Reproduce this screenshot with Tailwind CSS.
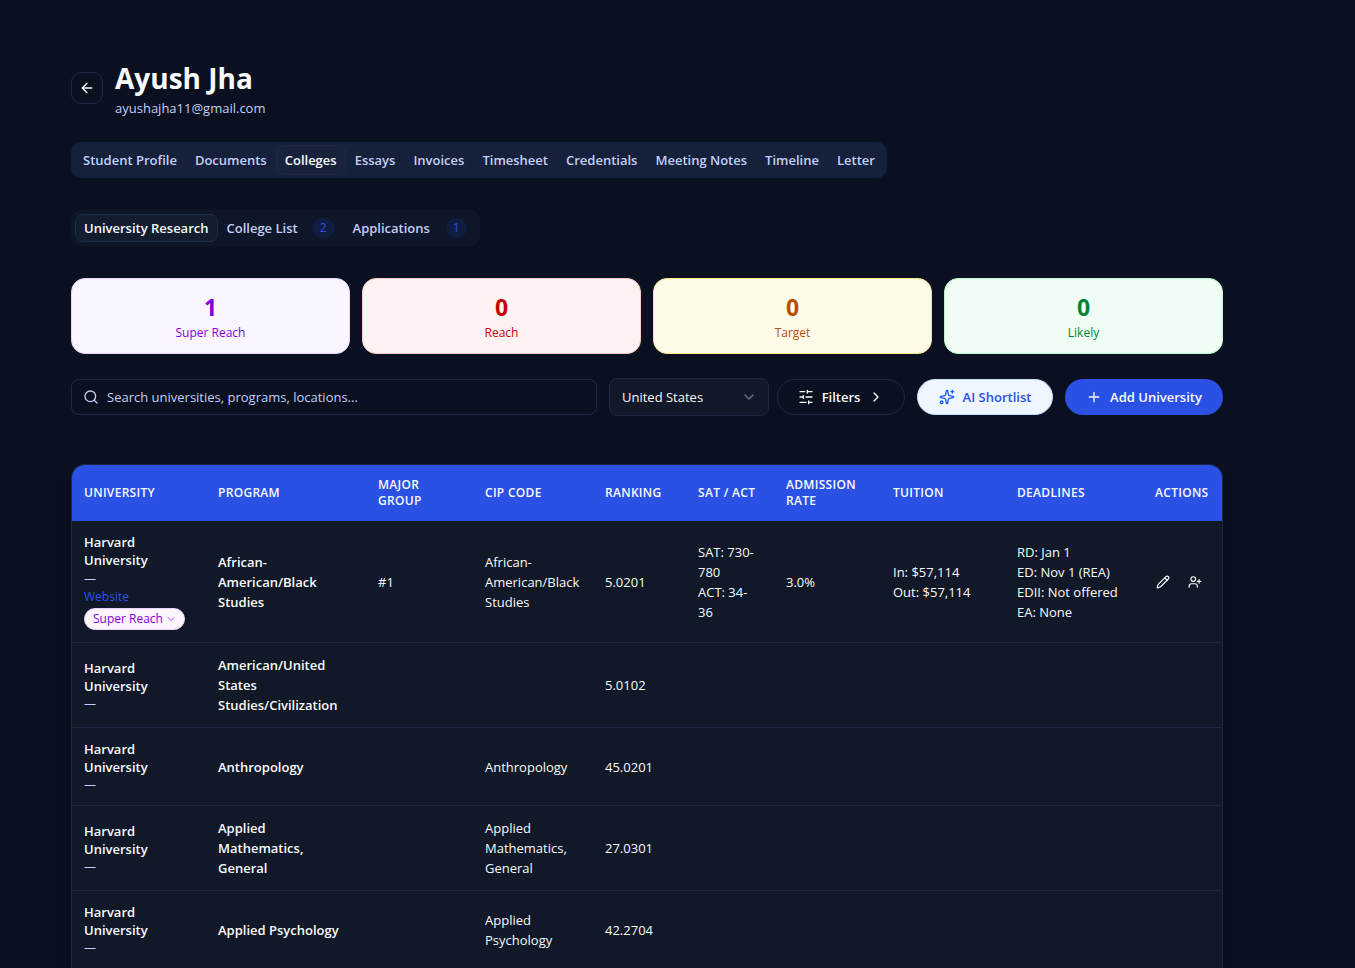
<!DOCTYPE html>
<html lang="en">
<head>
    <meta charset="UTF-8">
    <meta name="viewport" content="width=device-width, initial-scale=1.0">
    <title>Ayush Jha - Colleges</title>
    <script src="https://cdn.jsdelivr.net/npm/@tailwindcss/browser@4"></script>
</head>
<body class="bg-[#0a101f] text-[#f8fafc] font-['Open_Sans','Noto_Sans',sans-serif] text-[13px] leading-5">

    <main class="pt-[58px] pl-[71px] pr-[132px]">

        <!-- Student header -->
        <header class="flex items-center gap-3">
            <button type="button" aria-label="Back" class="flex items-center justify-center size-8 rounded-[10px] border border-[#1e2842]">
                <svg class="size-4" viewBox="0 0 24 24" fill="none" stroke="currentColor" stroke-width="2" stroke-linecap="round" stroke-linejoin="round"><path d="m12 19-7-7 7-7"/><path d="M19 12H5"/></svg>
            </button>
            <div>
                <h1 class="text-[28px] leading-10 font-bold">Ayush Jha</h1>
                <p class="text-[#c3cff5]">ayushajha11@gmail.com</p>
            </div>
        </header>

        <!-- Main tabs -->
        <nav class="mt-6 flex w-fit h-9 items-center rounded-[10px] bg-[#15203a] p-[3px] font-semibold text-[#c3cff5] whitespace-nowrap">
            <a href="#profile" class="px-2 py-1 border border-transparent">Student Profile</a>
            <a href="#documents" class="px-2 py-1 border border-transparent">Documents</a>
            <a href="#colleges" class="px-2 py-1 border border-[#1e2842] rounded-lg bg-[#18223a] text-[#f8fafc]">Colleges</a>
            <a href="#essays" class="px-2 py-1 border border-transparent">Essays</a>
            <a href="#invoices" class="px-2 py-1 border border-transparent">Invoices</a>
            <a href="#timesheet" class="px-2 py-1 border border-transparent">Timesheet</a>
            <a href="#credentials" class="px-2 py-1 border border-transparent">Credentials</a>
            <a href="#notes" class="px-2 py-1 border border-transparent">Meeting Notes</a>
            <a href="#timeline" class="px-2 py-1 border border-transparent">Timeline</a>
            <a href="#letter" class="px-2 py-1 border border-transparent">Letter</a>
        </nav>

        <!-- College tabs -->
        <nav class="mt-8 flex w-fit h-9 items-center rounded-[10px] bg-[#0e1629] p-1 font-semibold text-[#c3cff5] whitespace-nowrap">
            <a href="#research" class="px-2 py-[3px] border border-[#1e2b45] rounded-lg bg-[#131d30] text-[#f8fafc]">University Research</a>
            <a href="#list" class="flex items-center px-2 py-[3px] border border-transparent">College List
                <span class="ml-3.5 rounded-full bg-[#101c40] px-2 text-xs leading-5 font-medium text-[#2b50e4]">2</span>
            </a>
            <a href="#applications" class="flex items-center px-2 py-[3px] border border-transparent">Applications
                <span class="ml-4 rounded-full bg-[#101c40] px-[7px] text-xs leading-5 font-medium text-[#2b50e4]">1</span>
            </a>
        </nav>

        <!-- Category counts -->
        <section class="mt-8 grid grid-cols-4 gap-3 text-center">
            <div class="rounded-[14px] border border-purple-200 bg-purple-50 text-purple-700 p-3">
                <p class="text-[23px] leading-8 font-bold">1</p>
                <p class="mt-0.5 text-xs leading-4 font-medium">Super Reach</p>
            </div>
            <div class="rounded-[14px] border border-red-200 bg-red-50 text-red-700 p-3">
                <p class="text-[23px] leading-8 font-bold">0</p>
                <p class="mt-0.5 text-xs leading-4 font-medium">Reach</p>
            </div>
            <div class="rounded-[14px] border border-amber-200 bg-amber-50 text-amber-700 p-3">
                <p class="text-[23px] leading-8 font-bold">0</p>
                <p class="mt-0.5 text-xs leading-4 font-medium">Target</p>
            </div>
            <div class="rounded-[14px] border border-green-200 bg-green-50 text-green-700 p-3">
                <p class="text-[23px] leading-8 font-bold">0</p>
                <p class="mt-0.5 text-xs leading-4 font-medium">Likely</p>
            </div>
        </section>

        <!-- Search and actions -->
        <section class="mt-6 flex items-center gap-3">
            <div class="relative flex-1">
                <svg class="absolute left-3 top-2.5 size-4 text-[#c3cff5]" viewBox="0 0 24 24" fill="none" stroke="currentColor" stroke-width="2" stroke-linecap="round" stroke-linejoin="round"><path d="m21 21-4.34-4.34"/><circle cx="11" cy="11" r="8"/></svg>
                <input type="text" aria-label="Search universities" placeholder="Search universities, programs, locations..." class="block w-full h-9 rounded-lg border border-[#1e2842] pl-[35px] pr-3 placeholder:text-[#c3cff5]">
            </div>
            <div class="flex items-center gap-2">
                <div class="relative">
                    <select aria-label="Country" class="block w-40 h-[38px] appearance-none rounded-lg border border-[#1e2842] bg-[#111827] px-3">
                        <option>United States</option>
                    </select>
                    <svg class="pointer-events-none absolute right-3 top-[11px] size-4 text-[#64718f]" viewBox="0 0 24 24" fill="none" stroke="currentColor" stroke-width="2" stroke-linecap="round" stroke-linejoin="round"><path d="m6 9 6 6 6-6"/></svg>
                </div>
                <button type="button" class="flex w-32 h-9 items-center justify-center gap-2 rounded-full border border-[#1e2842] font-semibold">
                    <svg class="size-4" viewBox="0 0 24 24" fill="none" stroke="currentColor" stroke-width="2" stroke-linecap="round" stroke-linejoin="round"><path d="M21 4h-7M10 4H3M21 12h-9M8 12H3M21 20h-5M12 20H3M14 2v4M8 10v4M16 18v4"/></svg>
                    Filters
                    <svg class="size-4" viewBox="0 0 24 24" fill="none" stroke="currentColor" stroke-width="2" stroke-linecap="round" stroke-linejoin="round"><path d="m9 18 6-6-6-6"/></svg>
                </button>
            </div>
            <button type="button" class="flex w-[136px] h-9 items-center justify-center gap-2 rounded-full border border-blue-200 bg-blue-50 font-semibold text-[#2b50e4]">
                <svg class="size-4 text-blue-600" viewBox="0 0 24 24" fill="none" stroke="currentColor" stroke-width="2" stroke-linecap="round" stroke-linejoin="round"><path d="M11.017 2.814a1 1 0 0 1 1.966 0l1.051 5.558a2 2 0 0 0 1.594 1.594l5.558 1.051a1 1 0 0 1 0 1.966l-5.558 1.051a2 2 0 0 0-1.594 1.594l-1.051 5.558a1 1 0 0 1-1.966 0l-1.051-5.558a2 2 0 0 0-1.594-1.594l-5.558-1.051a1 1 0 0 1 0-1.966l5.558-1.051a2 2 0 0 0 1.594-1.594z"/><path d="M20 2v4M22 4h-4"/><circle cx="4" cy="20" r="2"/></svg>
                AI Shortlist
            </button>
            <button type="button" class="flex w-[158px] h-9 items-center justify-center gap-2 rounded-full bg-[#2b50e4] font-semibold">
                <svg class="size-4" viewBox="0 0 24 24" fill="none" stroke="currentColor" stroke-width="2" stroke-linecap="round" stroke-linejoin="round"><path d="M5 12h14M12 5v14"/></svg>
                Add University
            </button>
        </section>

        <!-- University table -->
        <div class="mt-12 overflow-hidden rounded-t-[14px] border border-b-0 border-[#1e2842] bg-[#111827] shadow-lg">
            <table class="w-full table-fixed text-left">
                <colgroup>
                    <col class="w-[134px]">
                    <col class="w-[160px]">
                    <col class="w-[107px]">
                    <col class="w-[120px]">
                    <col class="w-[93px]">
                    <col class="w-[88px]">
                    <col class="w-[107px]">
                    <col class="w-[124px]">
                    <col class="w-[138px]">
                    <col class="w-[79px]">
                </colgroup>
                <thead class="bg-[#2b50e4] text-xs leading-4 uppercase tracking-wide">
                    <tr class="h-14">
                        <th class="px-3 font-semibold">University</th>
                        <th class="px-3 font-semibold">Program</th>
                        <th class="px-3 font-semibold">Major<br>Group</th>
                        <th class="px-3 font-semibold">CIP Code</th>
                        <th class="px-3 font-semibold">Ranking</th>
                        <th class="px-3 font-semibold whitespace-nowrap">SAT / ACT</th>
                        <th class="px-3 font-semibold">Admission Rate</th>
                        <th class="px-3 font-semibold">Tuition</th>
                        <th class="px-3 font-semibold">Deadlines</th>
                        <th class="px-3 font-semibold">Actions</th>
                    </tr>
                </thead>
                <tbody>
                    <tr class="border-b border-[#1e2842]">
                        <td class="p-3">
                            <p class="leading-[18px] font-semibold">Harvard University</p>
                            <p class="mt-0.5 text-xs leading-4 text-[#c3cff5]">—</p>
                            <a href="#website" class="mt-0.5 block text-xs leading-4 text-[#2b50e4]">Website</a>
                            <div class="relative mt-[3px] w-[101px]">
                                <select aria-label="Category" class="block w-full h-[22px] appearance-none rounded-full border border-purple-200 bg-purple-50 px-2 text-xs leading-4 font-medium text-purple-700">
                                    <option>Super Reach</option>
                                </select>
                                <svg class="pointer-events-none absolute right-2 top-[5px] size-3 text-purple-500" viewBox="0 0 24 24" fill="none" stroke="currentColor" stroke-width="2" stroke-linecap="round" stroke-linejoin="round"><path d="m6 9 6 6 6-6"/></svg>
                            </div>
                        </td>
                        <td class="p-3 font-semibold">African-American/Black Studies</td>
                        <td class="p-3">#1</td>
                        <td class="p-3">African-<br>American/Black Studies</td>
                        <td class="p-3">5.0201</td>
                        <td class="p-3">SAT: 730-780<br>ACT: 34-<br>36</td>
                        <td class="p-3">3.0%</td>
                        <td class="p-3">In: $57,114<br>Out: $57,114</td>
                        <td class="p-3 whitespace-nowrap">RD: Jan 1<br>ED: Nov 1 (REA)<br>EDII: Not offered<br>EA: None</td>
                        <td class="px-1">
                            <div class="flex">
                                <button type="button" aria-label="Edit" class="flex size-8 items-center justify-center">
                                    <svg class="size-3.5" viewBox="0 0 24 24" fill="none" stroke="currentColor" stroke-width="2" stroke-linecap="round" stroke-linejoin="round"><path d="M21.174 6.812a1 1 0 0 0-3.986-3.987L3.842 16.174a2 2 0 0 0-.5.83l-1.321 4.352a.5.5 0 0 0 .623.622l4.353-1.32a2 2 0 0 0 .83-.497z"/><path d="m15 5 4 4"/></svg>
                                </button>
                                <button type="button" aria-label="Assign" class="flex size-8 items-center justify-center">
                                    <svg class="size-3.5" viewBox="0 0 24 24" fill="none" stroke="currentColor" stroke-width="2" stroke-linecap="round" stroke-linejoin="round"><path d="M16 21v-2a4 4 0 0 0-4-4H6a4 4 0 0 0-4 4v2"/><circle cx="9" cy="7" r="4"/><path d="M19 8v6M22 11h-6"/></svg>
                                </button>
                            </div>
                        </td>
                    </tr>
                    <tr class="border-b border-[#1e2842]">
                        <td class="p-3">
                            <p class="leading-[18px] font-semibold">Harvard University</p>
                            <p class="mt-px text-xs leading-4 text-[#c3cff5]">—</p>
                        </td>
                        <td class="p-3 font-semibold">American/United States Studies/Civilization</td>
                        <td></td>
                        <td></td>
                        <td class="p-3">5.0102</td>
                        <td colspan="5"></td>
                    </tr>
                    <tr class="border-b border-[#1e2842]">
                        <td class="p-3">
                            <p class="leading-[18px] font-semibold">Harvard University</p>
                            <p class="mt-px text-xs leading-4 text-[#c3cff5]">—</p>
                        </td>
                        <td class="p-3 font-semibold">Anthropology</td>
                        <td></td>
                        <td class="p-3">Anthropology</td>
                        <td class="p-3">45.0201</td>
                        <td colspan="5"></td>
                    </tr>
                    <tr class="border-b border-[#1e2842]">
                        <td class="p-3">
                            <p class="leading-[18px] font-semibold">Harvard University</p>
                            <p class="mt-px text-xs leading-4 text-[#c3cff5]">—</p>
                        </td>
                        <td class="p-3 font-semibold">Applied Mathematics, General</td>
                        <td></td>
                        <td class="p-3">Applied Mathematics, General</td>
                        <td class="p-3">27.0301</td>
                        <td colspan="5"></td>
                    </tr>
                    <tr class="border-b border-[#1e2842]">
                        <td class="p-3">
                            <p class="leading-[18px] font-semibold">Harvard University</p>
                            <p class="mt-px text-xs leading-4 text-[#c3cff5]">—</p>
                        </td>
                        <td class="p-3 font-semibold">Applied Psychology</td>
                        <td></td>
                        <td class="p-3">Applied Psychology</td>
                        <td class="p-3">42.2704</td>
                        <td colspan="5"></td>
                    </tr>
                </tbody>
            </table>
        </div>
    </main>

</body>
</html>
